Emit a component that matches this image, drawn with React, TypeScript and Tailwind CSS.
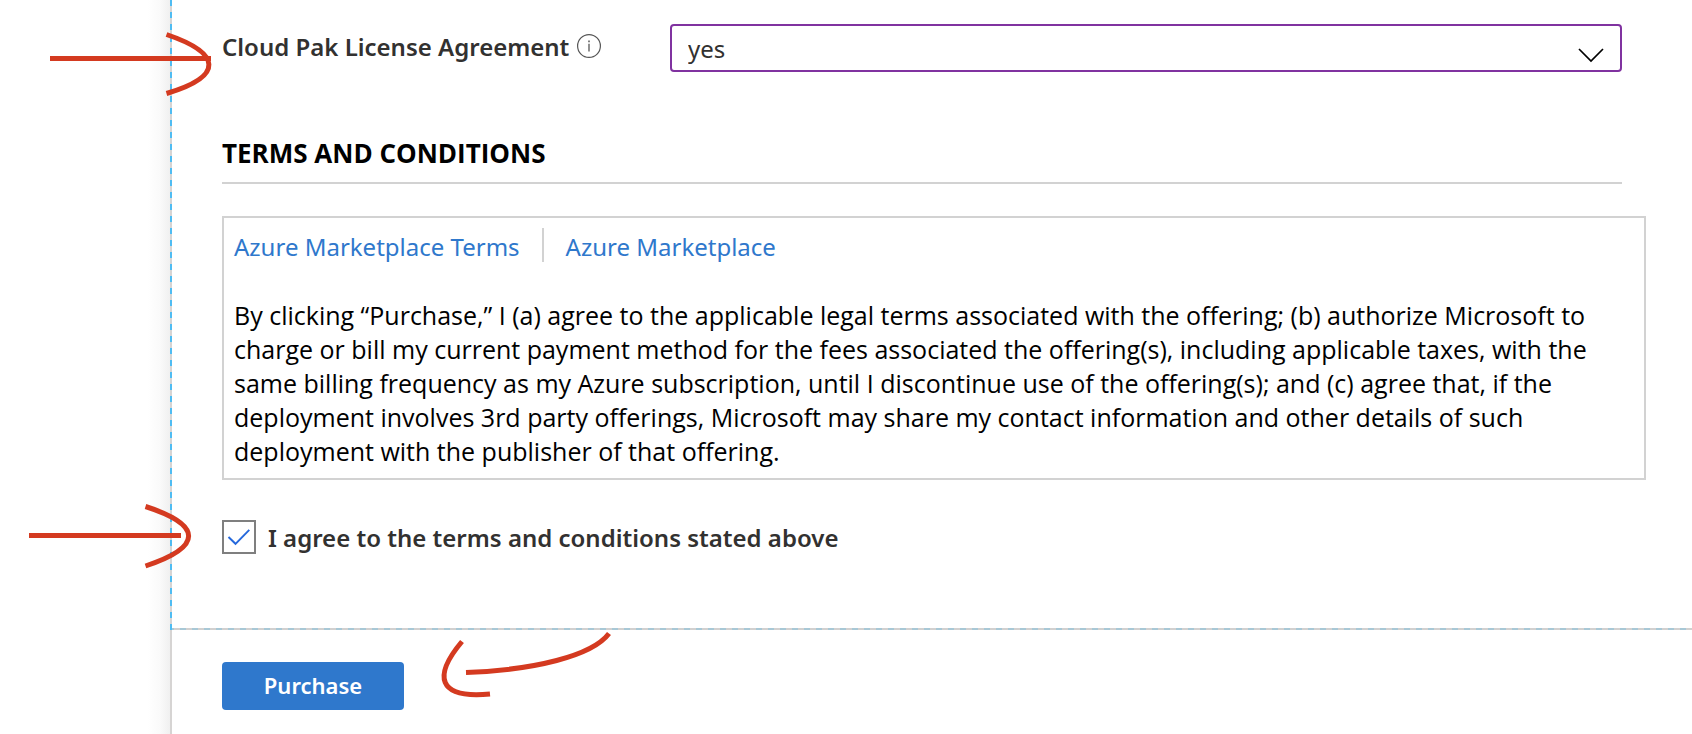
import { useState } from "react";

function InfoIcon() {
  return (
    <svg width="24" height="24" viewBox="0 0 24 24" fill="none" stroke="#555" aria-hidden="true">
      <circle cx="12" cy="12" r="11.4" strokeWidth="1.2" />
      <path d="M12 9.8V17.5" strokeWidth="1.3" />
      <path d="M12 6.6V8.2" strokeWidth="1.5" />
    </svg>
  );
}

function RightArrow({ className, shaft, head }: { className: string; shaft: string; head: string }) {
  return (
    <svg
      className={className}
      width="220"
      height="80"
      viewBox="0 0 220 80"
      fill="none"
      stroke="#d43a20"
      strokeWidth="5"
      aria-hidden="true"
    >
      <path d={shaft} />
      <path d={head} />
    </svg>
  );
}

function PurchaseArrow() {
  return (
    <svg
      className="pointer-events-none absolute left-[436px] top-[626px]"
      width="180"
      height="80"
      viewBox="0 0 180 80"
      fill="none"
      stroke="#d43a20"
      strokeWidth="5"
      aria-hidden="true"
    >
      <path d="M30 46.5C98 44 156 30 173 7.500" />
      <path d="M26 15.500C-3 50 1 73 54 68" />
    </svg>
  );
}

export default function App() {
  const [agreed, setAgreed] = useState(true);
  const [license, setLicense] = useState("yes");

  return (
    <div className="relative flex min-h-screen bg-white font-['Noto_Sans','Open_Sans',sans-serif] text-[24px] leading-[34px] text-black">
      <div className="w-[170px] shrink-0 bg-[linear-gradient(to_right,#ffffff_148px,#fafafa_160px,#f0f0f0_170px)]" />

      <div className="flex min-w-0 flex-1 flex-col">
        <main className="flex">
          <div className="w-[2px] shrink-0 bg-[repeating-linear-gradient(to_bottom,#4fbcf2_0px,#4fbcf2_6px,#d6d4d3_6px,#d6d4d3_12px)]" />
          <div className="min-w-0 flex-1 pb-[76px] pl-[50px] pr-[70px] pt-6">
            <div className="flex items-start">
              <div className="flex w-[448px] shrink-0 items-center gap-2 pt-1">
                <label htmlFor="license" className="whitespace-nowrap pt-[2px] font-semibold text-[#323130]">
                  Cloud Pak License Agreement
                </label>
                <InfoIcon />
              </div>
              <div className="relative flex-1">
                <select
                  id="license"
                  value={license}
                  onChange={(e) => setLicense(e.target.value)}
                  className="block h-12 w-full appearance-none rounded-[4px] border-2 border-[#8032a0] bg-white px-4 pt-[2px] text-[#323130] outline-none"
                >
                  <option value="yes">yes</option>
                  <option value="no">no</option>
                </select>
                <svg
                  className="pointer-events-none absolute right-[17px] top-[23px]"
                  width="28"
                  height="16"
                  viewBox="0 0 28 16"
                  fill="none"
                  stroke="#000"
                  strokeWidth="1.7"
                  aria-hidden="true"
                >
                  <path d="M2 2L14 14L26 2" />
                </svg>
              </div>
            </div>

            <h2 className="mt-16 border-b-2 border-[#d2d2d2] pb-3 font-['Open_Sans','Noto_Sans',sans-serif] text-[26px] leading-[34px] font-bold">
              TERMS AND CONDITIONS
            </h2>

            <section className="-mr-6 mt-8 border-2 border-[#d2d2d2] p-[10px]">
              <nav className="flex items-start gap-[22px]">
                <a href="#terms" className="pt-[2px] text-[#2f78cc]">
                  Azure Marketplace Terms
                </a>
                <span className="h-[34px] w-[2px] bg-[#d2d2d2]" />
                <a href="#marketplace" className="pt-[2px] text-[#2f78cc]">
                  Azure Marketplace
                </a>
              </nav>
              <p className="mt-[34px] max-w-[1370px] font-['Open_Sans','Noto_Sans',sans-serif] text-[25px] leading-[34px]">
                By clicking “Purchase,” I (a) agree to the applicable legal terms associated with the offering; (b)
                authorize Microsoft to charge or bill my current payment method for the fees associated the
                offering(s), including applicable taxes, with the same billing frequency as my Azure subscription,
                until I discontinue use of the offering(s); and (c) agree that, if the deployment involves 3rd party
                offerings, Microsoft may share my contact information and other details of such deployment with the
                publisher of that offering.
              </p>
            </section>

            <div className="mt-10 flex h-[34px] items-center gap-3">
              <div className="relative size-[34px]">
                <input
                  id="agree"
                  type="checkbox"
                  checked={agreed}
                  onChange={(e) => setAgreed(e.target.checked)}
                  className="block size-[34px] appearance-none border-2 border-[#7f7f7f] bg-white"
                />
                {agreed && (
                  <svg
                    className="pointer-events-none absolute left-0 top-0"
                    width="34"
                    height="34"
                    viewBox="0 0 34 34"
                    fill="none"
                    stroke="#2568dc"
                    strokeWidth="1.9"
                    aria-hidden="true"
                  >
                    <path d="M6.500 17L13.500 23.800L27.300 9.800" />
                  </svg>
                )}
              </div>
              <label htmlFor="agree" className="pt-[2px] font-semibold text-[#323130]">
                I agree to the terms and conditions stated above
              </label>
            </div>
          </div>
        </main>

        <footer className="flex flex-1 flex-col border-l-2 border-[#d6d4d3]">
          <div className="-mt-[2px] h-[2px] shrink-0 bg-[repeating-linear-gradient(to_right,#a8c8d6_0px,#a8c8d6_2px,#d2d0cf_2px,#d2d0cf_8px,#a8c8d6_8px,#a8c8d6_12px)]" />
          <div className="px-[50px] pt-8">
            <button
              type="button"
              className="block h-12 w-[182px] rounded-[4px] bg-[#2f78cc] pb-[2px] text-center text-[22px] font-semibold text-white"
            >
              Purchase
            </button>
          </div>
        </footer>
      </div>

      <RightArrow
        className="pointer-events-none absolute left-0 top-[20px]"
        shaft="M50 38.500H211"
        head="M166.500 14.500C221 33 225 56 166.500 73.500"
      />
      <RightArrow
        className="pointer-events-none absolute left-0 top-[496px]"
        shaft="M29 39.500H181"
        head="M145.500 10.500C203 29 203 51 145.500 70"
      />
      <PurchaseArrow />
    </div>
  );
}
